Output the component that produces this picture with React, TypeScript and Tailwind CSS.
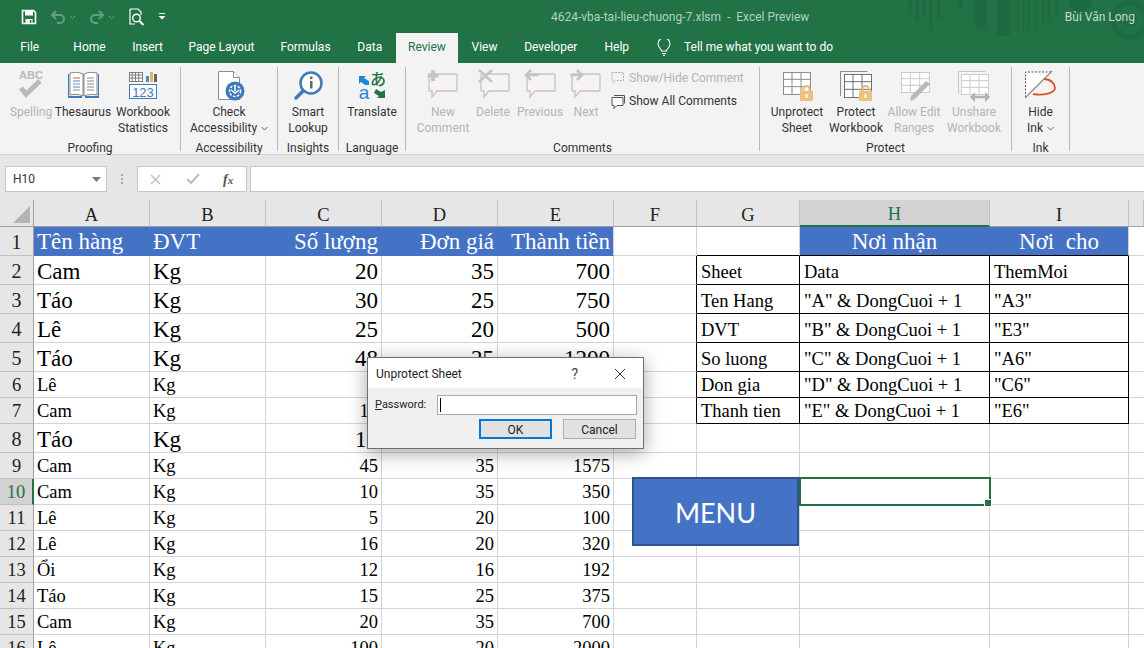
import type { ReactNode } from "react"

const grey = "#c4c4c4"

type IconProps = { cx: number; children: ReactNode }

// icons are drawn in page coordinates, so the viewBox just follows the button centre
function Icon({ cx, children }: IconProps) {
  return (
    <svg viewBox={`${cx - 22} 67 44 37`} width={44} height={37} className="shrink-0">
      {children}
    </svg>
  )
}

function RibbonButton({
  width,
  label,
  disabled,
  caret,
  children,
}: {
  width: string
  label: string[]
  disabled?: boolean
  caret?: boolean
  children: ReactNode
}) {
  return (
    <div className={`${width} flex flex-col items-center`}>
      {children}
      <div
        className={`text-center text-[12px] leading-[16px] whitespace-nowrap ${
          disabled ? "text-[#b4b4b4]" : "text-[#333333]"
        }`}
      >
        {label.map((line, i) => (
          <div key={i} className="flex items-center justify-center">
            {line}
            {caret && i === label.length - 1 && (
              <svg width="7" height="5" viewBox="0 0 7 5" className="ml-[4px]">
                <path d="M.5 1l3 3 3-3" fill="none" stroke="#666" strokeWidth="1" />
              </svg>
            )}
          </div>
        ))}
      </div>
    </div>
  )
}

function Group({ width, label, pad, children }: { width: string; label: string; pad?: string; children: ReactNode }) {
  return (
    <div className={`${width} h-[84px] shrink-0 flex flex-col border-r border-[#b9b9b9]`}>
      <div className={`h-[71px] flex ${pad ?? ""}`}>{children}</div>
      <div className="h-[13px] text-center text-[12px] leading-[20px] text-[#333333] whitespace-nowrap">{label}</div>
    </div>
  )
}

function Bubble({ x, tail, w = 27 }: { x: number; tail: number; w?: number }) {
  return (
    <path
      d={`M${x + 1} 74h${w - 1}a1 1 0 0 1 1 1v15a1 1 0 0 1 -1 1H${tail + 6}l-5 6v-6H${x + 1}a1 1 0 0 1 -1 -1v-15a1 1 0 0 1 1 -1z`}
      fill="#f6f2f6"
      stroke={grey}
      strokeWidth="1.3"
    />
  )
}

function SheetGrid({ x, y, w, h, color, cols = 3, rows = 3 }: { x: number; y: number; w: number; h: number; color: string; cols?: number; rows?: number }) {
  const lines = []
  for (let i = 1; i < cols; i++) {
    const lx = x + (w * i) / cols
    lines.push(<path key={`c${i}`} d={`M${lx} ${y}v${h}`} stroke={color} strokeWidth="1" />)
  }
  for (let i = 1; i < rows; i++) {
    const ly = y + (h * i) / rows
    lines.push(<path key={`r${i}`} d={`M${x} ${ly}h${w}`} stroke={color} strokeWidth="1" />)
  }
  return (
    <g>
      <rect x={x + 0.5} y={y + 0.5} width={w} height={h} fill="#ffffff" stroke={color} strokeWidth="1" />
      {lines}
    </g>
  )
}

function Lock({ x, y }: { x: number; y: number }) {
  return (
    <g>
      <path d={`M${x + 3.5} ${y + 7}v-3a3 3 0 0 1 6 0v3`} fill="none" stroke="#e6bd78" strokeWidth="2" />
      <rect x={x} y={y + 6} width={13} height={10} fill="#ecc27e" />
      <rect x={x + 5.5} y={y + 9} width={2} height={4} fill="#ffffff" />
    </g>
  )
}

function TitleDecor() {
  return (
    <svg viewBox="900 0 244 63" width={244} height={63} className="absolute right-0 top-0">
      <g fill="#1f6b41">
        <rect x="908" y="0" width="3.500" height="15" />
        <rect x="915" y="0" width="4" height="22" />
        <rect x="922" y="0" width="3.500" height="16" />
        <rect x="929" y="0" width="4" height="31" />
        <rect x="937" y="0" width="4" height="18" />
        <path d="M957 0h6v13z" />
        <path d="M974 0h13v32l-13-6z" />
        <rect x="997" y="0" width="13" height="36" />
        <rect x="1017" y="0" width="2" height="34" />
        <rect x="1022" y="0" width="2" height="32" />
        <rect x="1028" y="0" width="2" height="30" />
        <rect x="1035" y="0" width="2" height="28" />
        <rect x="1042" y="0" width="2" height="25" />
        <rect x="1048" y="0" width="2" height="21" />
        <rect x="1055" y="0" width="2" height="16" />
        <circle cx="1080" cy="0" r="12" />
        <circle cx="1130" cy="20" r="7" />
      </g>
      <circle cx="1130" cy="20" r="17" fill="none" stroke="#1f6b41" strokeWidth="6" />
    </svg>
  )
}

function TitleBar() {
  return (
    <div className="relative h-[33px] flex items-center">
      <div className="flex items-center pl-[21px]">
        <svg width="16" height="16" viewBox="0 0 16 16">
          <path d="M1.500 1.500h11l2 2v11h-13z" fill="none" stroke="#ffffff" strokeWidth="1.600" />
          <rect x="4" y="2" width="8" height="4.500" fill="#ffffff" />
          <rect x="4.500" y="10" width="7" height="4.500" fill="#ffffff" />
          <rect x="8.800" y="11" width="1.600" height="3" fill="#217346" />
        </svg>
        <svg width="16" height="14" viewBox="0 0 16 14" className="ml-[13px]">
          <path d="M2 5h8a4 4 0 0 1 0 8H7" fill="none" stroke="#63a080" strokeWidth="2" />
          <path d="M6 1L2 5l4 4" fill="none" stroke="#63a080" strokeWidth="2" />
        </svg>
        <svg width="7" height="4" viewBox="0 0 7 4" className="ml-[3px]">
          <path d="M.5.500l3 3 3-3" fill="none" stroke="#63a080" />
        </svg>
        <svg width="16" height="14" viewBox="0 0 16 14" className="ml-[13px]">
          <path d="M14 5H6a4 4 0 0 0 0 8h3" fill="none" stroke="#63a080" strokeWidth="2" />
          <path d="M10 1l4 4-4 4" fill="none" stroke="#63a080" strokeWidth="2" />
        </svg>
        <svg width="7" height="4" viewBox="0 0 7 4" className="ml-[3px]">
          <path d="M.5.500l3 3 3-3" fill="none" stroke="#63a080" />
        </svg>
        <svg width="16" height="18" viewBox="0 0 16 18" className="ml-[14px]">
          <path d="M1 1h8l3 3v3M6 16H1V1" fill="none" stroke="#ffffff" strokeWidth="1.200" />
          <circle cx="7.500" cy="10" r="3.800" fill="none" stroke="#ffffff" strokeWidth="1.400" />
          <path d="M10.500 13l4 4" stroke="#ffffff" strokeWidth="1.800" />
        </svg>
        <svg width="8" height="7" viewBox="0 0 8 7" className="ml-[13px]">
          <path d="M1 .500h6" stroke="#ffffff" />
          <path d="M.5 3h7L4 6.500z" fill="#ffffff" />
        </svg>
      </div>
      <div className="ml-[385px] text-[12px] text-[#b4d0c0] whitespace-pre">
        4624-vba-tai-lieu-chuong-7.xlsm  -  Excel Preview
      </div>
      <div className="ml-auto pr-[9px] text-[12px] text-[#c5dbce]">Bùi Văn Long</div>
    </div>
  )
}

function Tab({ width, children }: { width: string; children: ReactNode }) {
  return <div className={`${width} flex items-center justify-center pb-[2px] whitespace-nowrap`}>{children}</div>
}

function TabBar() {
  return (
    <div className="relative h-[30px] flex items-stretch text-[12px] text-white">
      <Tab width="w-[59.5px]">File</Tab>
      <Tab width="w-[60px]">Home</Tab>
      <Tab width="w-[56px]">Insert</Tab>
      <Tab width="w-[92px]">Page Layout</Tab>
      <Tab width="w-[76px]">Formulas</Tab>
      <Tab width="w-[52.5px]">Data</Tab>
      <div className="w-[62px] flex items-center justify-center bg-[#f3f3f3] text-[#217346] pb-[2px]">Review</div>
      <Tab width="w-[53px]">View</Tab>
      <Tab width="w-[79.5px]">Developer</Tab>
      <Tab width="w-[52.5px]">Help</Tab>
      <div className="ml-[14px] flex items-center pb-[2px]">
        <svg width="14" height="17" viewBox="0 0 14 17">
          <path d="M4.500 12c0-2-3.500-3.500-3.500-7a6 6 0 0 1 12 0c0 3.500-3.500 5-3.500 7z" fill="none" stroke="#ffffff" strokeWidth="1.100" />
          <path d="M5 14.500h4M6 16.300h2" stroke="#ffffff" strokeWidth="1.100" />
        </svg>
        <span className="ml-[13px] whitespace-nowrap">Tell me what you want to do</span>
      </div>
    </div>
  )
}

function Ribbon() {
  return (
    <div className="h-[92px] flex pt-[4px] bg-[#f3f3f3] border-b border-[#d2d2d2]">
      <Group width="w-[181px]" label="Proofing" pad="pl-[5px]">
        <RibbonButton width="w-[52px]" label={["Spelling"]} disabled>
          <Icon cx={31}>
            <text x="31" y="79" textAnchor="middle" fontSize="11" fontWeight="700" fill="#b9b9b9" fontFamily="Liberation Sans, sans-serif">ABC</text>
            <path d="M21 88l5 6 14-13" fill="none" stroke="#b9b9b9" strokeWidth="5" />
          </Icon>
        </RibbonButton>
        <RibbonButton width="w-[52px]" label={["Thesaurus"]}>
          <Icon cx={83}>
            <path d="M68 74h1v22h13v2H68z" fill="#3f7ab8" />
            <path d="M99 74h-1v22H85v2h14z" fill="#3f7ab8" />
            <path d="M70 73c4-1 9-1 13 1v22c-4-2-9-2-13-1z" fill="#ffffff" stroke="#5d6b7a" strokeWidth=".8" />
            <path d="M84 74c4-2 9-2 13-1v22c-4-1-9-1-13 1z" fill="#ffffff" stroke="#5d6b7a" strokeWidth=".8" />
            <path d="M73 78h7" stroke="#d8562c" />
            <path d="M73 81h7M73 87h7" stroke="#4d8ac4" />
            <path d="M73 84h7M73 90h7M87 78h7M87 81h7M87 84h7M87 87h7M87 90h7" stroke="#8a8a8a" />
          </Icon>
        </RibbonButton>
        <RibbonButton width="w-[68px]" label={["Workbook", "Statistics"]}>
          <Icon cx={143}>
            <SheetGrid x={129} y={72} w={13} h={9} color="#7f7f7f" cols={4} rows={3} />
            <rect x="146" y="76" width="3" height="6" fill="#4d8ac4" />
            <rect x="150" y="72" width="3" height="10" fill="#e5b566" />
            <rect x="154" y="74" width="3" height="8" fill="#666666" />
            <rect x="129.500" y="84.500" width="27" height="14" fill="#ffffff" stroke="#3f7ab8" />
            <text x="143" y="96.500" textAnchor="middle" fontSize="13" fill="#3f7ab8" fontFamily="Liberation Sans, sans-serif">123</text>
          </Icon>
        </RibbonButton>
      </Group>

      <Group width="w-[97px]" label="Accessibility">
        <RibbonButton width="w-[96px]" label={["Check", "Accessibility"]} caret>
          <Icon cx={229}>
            <path d="M218.500 71.500h15l6 6v22h-21z" fill="#ffffff" stroke="#8c8c8c" />
            <path d="M233.500 71.500v6h6" fill="#ffffff" stroke="#8c8c8c" />
            <circle cx="235" cy="91" r="9.500" fill="#3f7ab8" />
            <circle cx="235" cy="91" r="5.500" fill="none" stroke="#ffffff" strokeWidth="1.500" strokeDasharray="2.500 1.500" />
            <path d="M235 85v6M231 90l4 3 4-3" fill="none" stroke="#ffffff" strokeWidth="1.500" />
          </Icon>
        </RibbonButton>
      </Group>

      <Group width="w-[61px]" label="Insights">
        <RibbonButton width="w-[60px]" label={["Smart", "Lookup"]}>
          <Icon cx={308}>
            <circle cx="311" cy="83" r="10.500" fill="#ffffff" stroke="#3f7ab8" strokeWidth="2.500" />
            <path d="M303 91l-7 7" stroke="#3f7ab8" strokeWidth="3.500" strokeLinecap="round" />
            <rect x="310" y="81" width="2.500" height="7.500" fill="#666666" />
            <rect x="310" y="76.500" width="2.500" height="2.500" fill="#666666" />
          </Icon>
        </RibbonButton>
      </Group>

      <Group width="w-[67px]" label="Language">
        <RibbonButton width="w-[66px]" label={["Translate"]}>
          <Icon cx={372}>
            <text x="378" y="85" textAnchor="middle" fontSize="16" fontWeight="500" fill="#217346" fontFamily="Noto Sans CJK JP, sans-serif">あ</text>
            <text x="364" y="99" textAnchor="middle" fontSize="19" fontWeight="500" fill="#1e88d8" fontFamily="Liberation Sans, sans-serif">a</text>
            <path d="M359 76h7l-2 2 5 3v4h-4l-4-3-2 2z" fill="#1e88d8" />
            <path d="M385 98h-8l2-2-5-3 2-4 5 3 4-2z" fill="#217346" />
          </Icon>
        </RibbonButton>
      </Group>

      <Group width="w-[354px]" label="Comments" pad="pl-[7px]">
        <RibbonButton width="w-[60px]" label={["New", "Comment"]} disabled>
          <Icon cx={443}>
            <Bubble x={429} tail={431} />
            <path d="M433 70v11M427.500 75.500h11" stroke="#c9c4c9" strokeWidth="4" />
          </Icon>
        </RibbonButton>
        <RibbonButton width="w-[40px]" label={["Delete"]} disabled>
          <Icon cx={493}>
            <Bubble x={481} tail={483} />
            <path d="M479 70l13 12M492 70l-13 12" stroke="#c4c4c4" strokeWidth="2.500" />
          </Icon>
        </RibbonButton>
        <RibbonButton width="w-[54px]" label={["Previous"]} disabled>
          <Icon cx={540}>
            <Bubble x={527} tail={529} />
            <path d="M539 75h-11M531 70l-5 5 5 5" fill="none" stroke="#c4c4c4" strokeWidth="2.500" />
          </Icon>
        </RibbonButton>
        <RibbonButton width="w-[38px]" label={["Next"]} disabled>
          <Icon cx={586}>
            <Bubble x={572} tail={574} />
            <path d="M570 75h12M577 70l5 5-5 5" fill="none" stroke="#c4c4c4" strokeWidth="2.500" />
          </Icon>
        </RibbonButton>
        <div className="ml-[6px] flex flex-col text-[12px] whitespace-nowrap">
          <div className="h-[22px] flex items-center text-[#b4b4b4]">
            <svg width="14" height="14" viewBox="0 0 14 14" className="mr-[4px]">
              <path d="M1 1.500h11.500v8h-7l-3 3v-3H1z" fill="none" stroke="#b4b4b4" strokeDasharray="2 1" />
            </svg>
            Show/Hide Comment
          </div>
          <div className="mt-[1px] h-[22px] flex items-center text-[#333333]">
            <svg width="14" height="15" viewBox="0 0 14 15" className="mr-[4px]">
              <path d="M3 1.500h10.500v8" fill="none" stroke="#555555" />
              <path d="M1 3.500h11v8H6l-3 3v-3H1z" fill="#ffffff" stroke="#555555" />
            </svg>
            Show All Comments
          </div>
        </div>
      </Group>

      <Group width="w-[252px]" label="Protect" pad="pl-[7px]">
        <RibbonButton width="w-[60px]" label={["Unprotect", "Sheet"]}>
          <Icon cx={797}>
            <SheetGrid x={783} y={72} w={27} h={22} color="#8c8c8c" />
            <Lock x={800} y={85} />
          </Icon>
        </RibbonButton>
        <RibbonButton width="w-[58px]" label={["Protect", "Workbook"]}>
          <Icon cx={856}>
            <path d="M840.500 96V71.500h27" fill="none" stroke="#8c8c8c" />
            <SheetGrid x={844} y={74} w={27} h={23} color="#707070" />
            <Lock x={859} y={85} />
          </Icon>
        </RibbonButton>
        <RibbonButton width="w-[58px]" label={["Allow Edit", "Ranges"]} disabled>
          <Icon cx={914}>
            <SheetGrid x={901} y={72} w={28} h={20} color="#cfc8cf" />
            <path d="M911 96l15-15 4 3-15 15-5 2z" fill="#b9b9b9" />
          </Icon>
        </RibbonButton>
        <RibbonButton width="w-[62px]" label={["Unshare", "Workbook"]} disabled>
          <Icon cx={974}>
            <path d="M958.500 94V71.500h27" fill="none" stroke="#c4c4c4" />
            <SheetGrid x={961} y={74} w={27} h={20} color="#cfc8cf" />
            <path d="M973 97h14" stroke="#b0b0b0" strokeWidth="2.500" />
            <path d="M975 92l-5 5 5 5zM985 92l5 5-5 5z" fill="#b0b0b0" />
          </Icon>
        </RibbonButton>
      </Group>

      <Group width="w-[58px]" label="Ink">
        <RibbonButton width="w-[57px]" label={["Hide", "Ink"]} caret>
          <Icon cx={1041}>
            <path d="M1025.500 97.500V72h26z" fill="#ffffff" />
            <path d="M1025.500 97.500V72h26" fill="none" stroke="#555555" strokeDasharray="2 1.500" />
            <path d="M1052 71l-27 27" stroke="#8c8c8c" strokeWidth="1.200" />
            <path d="M1044 79c7 0 11 5 11 9 0 5-12 8-22 6" fill="none" stroke="#d9542b" strokeWidth="1.800" />
          </Icon>
        </RibbonButton>
      </Group>
    </div>
  )
}

function FormulaBar() {
  return (
    <div className="h-[45px] flex pt-[11px] pl-[5px] bg-[#e6e6e6]">
      <div className="w-[102px] h-[26px] flex items-center justify-between pl-[7px] pr-[5px] bg-white border border-[#c6c6c6] text-[12px] text-[#333333]">
        H10
        <svg width="9" height="5" viewBox="0 0 9 5">
          <path d="M0 0h9L4.500 5z" fill="#7a7a7a" />
        </svg>
      </div>
      <div className="w-[30px] h-[26px] flex flex-col items-center justify-center gap-[2px]">
        <span className="w-[2px] h-[2px] bg-[#a5a5a5]" />
        <span className="w-[2px] h-[2px] bg-[#a5a5a5]" />
        <span className="w-[2px] h-[2px] bg-[#a5a5a5]" />
      </div>
      <div className="w-[110px] h-[26px] flex items-center bg-white border border-[#c6c6c6]">
        <svg width="11" height="11" viewBox="0 0 11 11" className="ml-[12px]">
          <path d="M1 1l9 9M10 1l-9 9" stroke="#bdbdbd" strokeWidth="1.300" />
        </svg>
        <svg width="14" height="12" viewBox="0 0 14 12" className="ml-[25px]">
          <path d="M1 6l4 4 8-9" fill="none" stroke="#bdbdbd" strokeWidth="2" />
        </svg>
        <span className="ml-[23px] font-['Liberation_Serif',serif] italic font-bold text-[14px] text-[#555555]">
          f<span className="text-[11px]">x</span>
        </span>
      </div>
      <div className="ml-[3px] flex-1 h-[26px] bg-white border-y border-l border-[#c6c6c6]" />
    </div>
  )
}

const letters = ["A", "B", "C", "D", "E", "F", "G", "H", "I", ""]

type Row = { big: boolean; cells: string[] }

const rows: Row[] = [
  { big: true, cells: ["Tên hàng", "ĐVT", "Số lượng", "Đơn giá", "Thành tiền", "", "", "Nơi nhận", "Nơi  cho"] },
  { big: true, cells: ["Cam", "Kg", "20", "35", "700", "", "Sheet", "Data", "ThemMoi"] },
  { big: true, cells: ["Táo", "Kg", "30", "25", "750", "", "Ten Hang", '"A" & DongCuoi + 1', '"A3"'] },
  { big: true, cells: ["Lê", "Kg", "25", "20", "500", "", "DVT", '"B" & DongCuoi + 1', '"E3"'] },
  { big: true, cells: ["Táo", "Kg", "48", "25", "1200", "", "So luong", '"C" & DongCuoi + 1', '"A6"'] },
  { big: false, cells: ["Lê", "Kg", "5", "20", "100", "", "Don gia", '"D" & DongCuoi + 1', '"C6"'] },
  { big: false, cells: ["Cam", "Kg", "10", "35", "350", "", "Thanh tien", '"E" & DongCuoi + 1', '"E6"'] },
  { big: true, cells: ["Táo", "Kg", "15", "25", "375", "", "", "", ""] },
  { big: false, cells: ["Cam", "Kg", "45", "35", "1575", "", "", "", ""] },
  { big: false, cells: ["Cam", "Kg", "10", "35", "350", "", "", "", ""] },
  { big: false, cells: ["Lê", "Kg", "5", "20", "100", "", "", "", ""] },
  { big: false, cells: ["Lê", "Kg", "16", "20", "320", "", "", "", ""] },
  { big: false, cells: ["Ổi", "Kg", "12", "16", "192", "", "", "", ""] },
  { big: false, cells: ["Táo", "Kg", "15", "25", "375", "", "", "", ""] },
  { big: false, cells: ["Cam", "Kg", "20", "35", "700", "", "", "", ""] },
  { big: false, cells: ["Lê", "Kg", "100", "20", "2000", "", "", "", ""] },
]

function cellClass(r: number, c: number, big: boolean) {
  const header = r === 0
  const filled = header && (c <= 4 || c === 7 || c === 8)
  const tableRow = r >= 1 && r <= 6
  const tableCol = c >= 6 && c <= 8
  const parts = ["relative flex items-end border-r border-b whitespace-pre font-['Liberation_Serif',serif] text-black overflow-hidden"]

  if (filled) parts.push("bg-[#4472c4] text-white")
  else parts.push("bg-white")

  // right border
  if (filled && c !== 4 && c !== 8) parts.push("border-r-[#4472c4]")
  else if (tableRow && (c === 5 || tableCol)) parts.push("border-r-black")
  else parts.push("border-r-[#d4d4d4]")

  // bottom border
  if ((header || tableRow) && tableCol) parts.push("border-b-black")
  else if (filled) parts.push("border-b-[#4472c4]")
  else parts.push("border-b-[#d4d4d4]")

  if (header && c >= 7) parts.push("justify-center text-[23px] leading-[26px]")
  else if (tableCol) parts.push("text-[18.5px] leading-[23px] pl-[4px]")
  else if (header) parts.push("text-[23px] leading-[27px]")
  else if (big) parts.push("text-[23px] leading-[25px]")
  else parts.push("text-[18.5px] leading-[23px]")

  if (c < 2) parts.push("pl-[3px]")
  if (c >= 2 && c <= 4) parts.push("justify-end pr-[3px]")

  return parts.join(" ")
}

function Sheet() {
  return (
    <div className="relative flex-1 overflow-hidden bg-[#e6e6e6]">
      <div className="grid grid-cols-[34px_116px_116px_116px_116px_116px_83px_103px_190px_139px_1fr] grid-rows-[27px_repeat(5,29px)_26px_26px_29px_repeat(8,26px)]">
        <div className="flex items-end justify-end border-r border-b border-[#a0a0a0] pb-[3px] pr-[3px]">
          <svg width="17" height="17" viewBox="0 0 17 17">
            <path d="M17 0v17H0z" fill="#b4b4b4" />
          </svg>
        </div>
        {letters.map((l, i) => (
          <div
            key={i}
            className={`flex items-center justify-center border-b font-['Liberation_Serif',serif] text-[18.5px] pt-[5px] ${
              l === "H"
                ? "bg-[#d2d2d2] text-[#217346] border-b-2 border-b-[#217346] border-r border-r-[#c0c0c0]"
                : "text-[#222222] border-b-[#a0a0a0] border-r border-r-[#c0c0c0]"
            }`}
          >
            {l}
          </div>
        ))}
        {rows.map((row, r) => [
          <div
            key={`h${r}`}
            className={`flex items-center justify-center border-b pt-[2px] font-['Liberation_Serif',serif] ${
              row.big ? "text-[20px]" : "text-[18.5px]"
            } ${
              r === 9
                ? "bg-[#d2d2d2] text-[#217346] border-r-2 border-r-[#217346] border-b-[#c0c0c0]"
                : "text-[#222222] border-r border-r-[#a0a0a0] border-b-[#c0c0c0]"
            }`}
          >
            {r + 1}
          </div>,
          ...row.cells.map((text, c) => (
            <div key={`${r}-${c}`} className={cellClass(r, c, row.big)}>
              {text}
            </div>
          )),
          <div key={`x${r}`} className="bg-white border-b border-[#d4d4d4]" />,
        ])}
      </div>

      {/* MENU shape floats over the sheet */}
      <div className="absolute left-[632px] top-[277px] w-[167px] h-[69px] flex items-center justify-center pt-[4px] bg-[#4472c4] border-2 border-[#2f528f] font-['Lato',sans-serif] text-[27px] text-white">
        MENU
      </div>

      {/* active cell H10 */}
      <div className="absolute left-[799px] top-[277px] w-[192px] h-[29px] border-2 border-[#217346]">
        <div className="absolute -right-[3px] -bottom-[3px] w-[6px] h-[6px] bg-[#217346] border border-white box-content" />
      </div>

      {/* Unprotect Sheet dialog */}
      <div className="absolute left-[367px] top-[157px] w-[277px] h-[92px] flex flex-col bg-[#f0f0f0] border border-[#6f6f6f] shadow-[0_4px_18px_rgba(0,0,0,0.35)] text-[12px] text-[#222222]">
        <div className="h-[30px] flex items-center bg-white pl-[8px] pt-[2px]">
          <span>Unprotect Sheet</span>
          <span className="ml-auto text-[14px] text-[#444444]">?</span>
          <svg width="12" height="12" viewBox="0 0 12 12" className="ml-[36px] mr-[17px]">
            <path d="M1 1l10 10M11 1L1 11" stroke="#333333" strokeWidth="1" />
          </svg>
        </div>
        <div className="flex items-center mt-[7px] pl-[7px]">
          <span className="w-[62px] text-[11px]">
            <span className="underline">P</span>assword:
          </span>
          <div className="w-[200px] h-[20px] flex items-center bg-white border border-[#a9a9a9] pl-[2px]">
            <span className="w-px h-[14px] bg-black" />
          </div>
        </div>
        <div className="flex mt-[4px] pl-[111px] gap-[11px]">
          <div className="w-[73px] h-[20px] flex items-center justify-center pt-[2px] bg-[#e1e1e1] border-2 border-[#0078d7]">OK</div>
          <div className="w-[73px] h-[20px] flex items-center justify-center pt-[2px] bg-[#e1e1e1] border border-[#adadad]">Cancel</div>
        </div>
      </div>
    </div>
  )
}

export default function App() {
  return (
    <div className="w-[1144px] h-[648px] flex flex-col overflow-hidden font-['Roboto',sans-serif]">
      <div className="relative bg-[#217346]">
        <TitleDecor />
        <TitleBar />
        <TabBar />
      </div>
      <Ribbon />
      <FormulaBar />
      <Sheet />
    </div>
  )
}
